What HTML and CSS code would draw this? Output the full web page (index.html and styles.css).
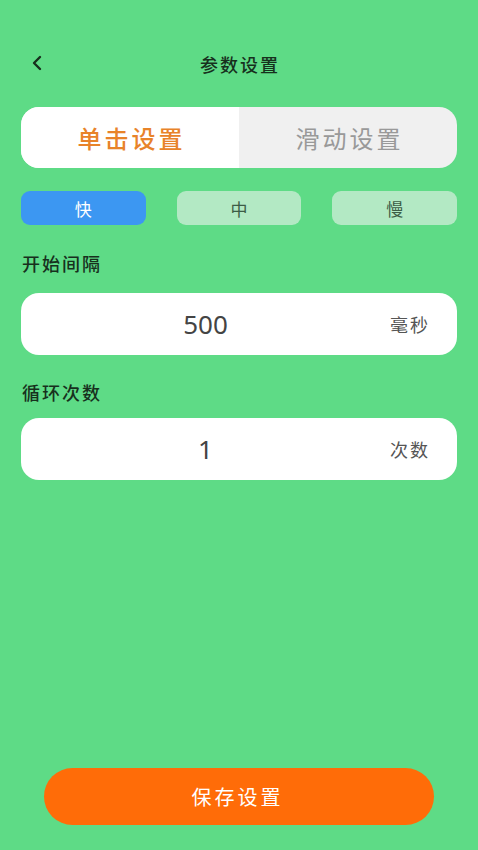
FILE: index.html
```html
<!DOCTYPE html>
<html lang="zh">
<head>
<meta charset="utf-8">
<link rel="stylesheet" href="styles.css">
</head>
<body>
<div class="page">
  <header class="header">
    <span class="back">
      <svg width="14" height="16" viewBox="0 0 14 16"><path d="M10 2 L4 8 L10 14" fill="none" stroke="#17301d" stroke-width="2.4" stroke-linecap="round" stroke-linejoin="round"/></svg>
    </span>
    <h1 class="title">参数设置</h1>
  </header>
  <div class="tabs">
    <div class="tab active">单击设置</div>
    <div class="tab">滑动设置</div>
  </div>
  <div class="speeds">
    <div class="speed on">快</div>
    <div class="speed">中</div>
    <div class="speed">慢</div>
  </div>
  <div class="label first">开始间隔</div>
  <div class="field">
    <span class="value">500</span>
    <span class="unit">毫秒</span>
  </div>
  <div class="label">循环次数</div>
  <div class="field">
    <span class="value">1</span>
    <span class="unit">次数</span>
  </div>
  <button class="save">保存设置</button>
</div>
</body>
</html>
```

FILE: styles.css
```css
html, body {
  margin: 0;
  padding: 0;
  background: #5edb86;
}
.page {
  min-height: 850px;
  box-sizing: border-box;
  display: flex;
  flex-direction: column;
  padding: 43px 21px 25px;
  font-family: "Noto Sans CJK SC", "Noto Sans", sans-serif;
}
.header {
  height: 42px;
  display: flex;
  align-items: center;
  justify-content: center;
  position: relative;
}
.back {
  position: absolute;
  left: 9px;
  top: 12px;
  display: flex;
}
.title {
  margin: 0;
  font-size: 18px;
  font-weight: 500;
  color: #17301d;
  letter-spacing: 2px;
  padding-left: 2px;
}
.tabs {
  margin-top: 22px;
  height: 61px;
  display: flex;
  border-radius: 18px;
  overflow: hidden;
  background: #f0f0f0;
}
.tab {
  flex: 1;
  display: flex;
  align-items: center;
  justify-content: center;
  font-size: 24px;
  letter-spacing: 3px;
  padding-left: 3px;
  color: #999999;
}
.tab.active {
  background: #ffffff;
  color: #e8832a;
  font-weight: 500;
}
.speeds {
  margin-top: 23px;
  display: flex;
  gap: 31px;
}
.speed {
  flex: 1;
  height: 34px;
  border-radius: 9px;
  background: #b3e9c4;
  color: #3c5c46;
  display: flex;
  align-items: center;
  justify-content: center;
  font-size: 17px;
}
.speed.on {
  background: #3c97f2;
  color: #ffffff;
}
.label {
  margin-top: 25px;
  height: 24px;
  line-height: 24px;
  font-size: 18px;
  font-weight: 500;
  color: #17301d;
  letter-spacing: 2px;
  padding-left: 1px;
}
.label.first {
  margin-top: 26px;
}
.field {
  margin-top: 14px;
  height: 62px;
  border-radius: 18px;
  background: #ffffff;
  display: flex;
  align-items: center;
}
.label.first + .field {
  margin-top: 18px;
}
.value {
  flex: 1;
  text-align: center;
  font-family: "Noto Sans", "Open Sans", sans-serif;
  font-size: 26px;
  color: #444444;
}
.unit {
  width: 67px;
  font-size: 18px;
  color: #555555;
  letter-spacing: 2px;
}
.save {
  margin: auto 23px 0;
  height: 57px;
  border: none;
  border-radius: 29px;
  background: #ff6c08;
  color: #ffffff;
  font-family: "Noto Sans CJK SC", "Noto Sans", sans-serif;
  font-size: 20px;
  letter-spacing: 3px;
  padding-left: 3px;
}
```
